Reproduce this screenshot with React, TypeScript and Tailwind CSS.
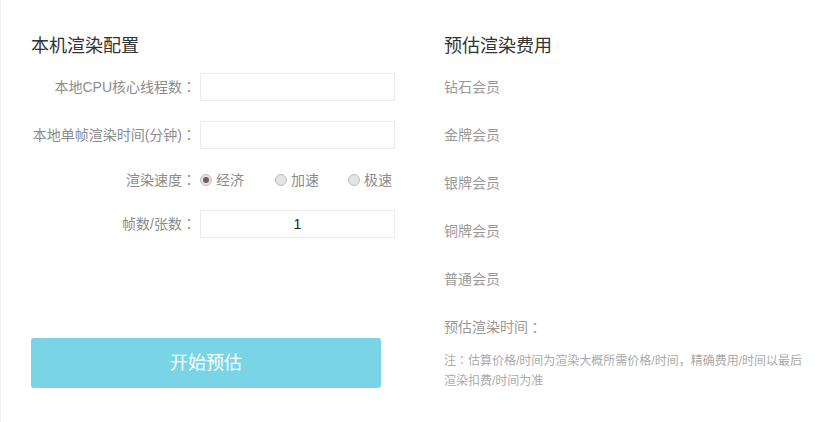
import { useState } from 'react';

const FONT = { fontFamily: '"Liberation Sans", "Noto Sans CJK SC", sans-serif' };

type Speed = 'eco' | 'fast' | 'max';

// fullwidth colon, centred in its box like the original font draws it
function Colon() {
  return <span className="font-['Noto_Sans_CJK_TC',sans-serif]">：</span>;
}

function Radio({ checked, label, onClick }: { checked: boolean; label: string; onClick: () => void }) {
  return (
    <button type="button" onClick={onClick} className="flex items-center gap-[4px] text-[14px] text-[#8c8c8c]">
      <span className="flex h-[12px] w-[12px] items-center justify-center rounded-full border border-[#bdbdbd] bg-[#e4e4e4]">
        {checked && <span className="h-[6px] w-[6px] rounded-full bg-[#7b5858]" />}
      </span>
      {label}
    </button>
  );
}

function Field({ label, value = '' }: { label: string; value?: string }) {
  return (
    <div className="flex h-[28px] items-center">
      <label className="w-[169px] pr-[4px] text-right text-[14px] text-[#8c8c8c]">
        {label}
        <Colon />
      </label>
      <input
        defaultValue={value}
        className="h-[28px] w-[195px] border border-[#ebebeb] bg-white text-center text-[14px] text-[#222] outline-none"
      />
    </div>
  );
}

export default function App() {
  const [speed, setSpeed] = useState<Speed>('eco');
  const tiers = ['钻石会员', '金牌会员', '银牌会员', '铜牌会员', '普通会员'];

  return (
    <div style={FONT} className="flex h-[422px] w-[840px] border-l border-[#eef2f7] bg-white">
      <div className="w-[412px] pl-[30px] pt-[34px]">
        <h2 className="h-[24px] text-[18px] leading-[24px] text-[#333]">本机渲染配置</h2>
        <div className="mt-[15px] flex flex-col">
          <Field label="本地CPU核心线程数" />
          <div className="mt-[20px]">
            <Field label="本地单帧渲染时间(分钟)" />
          </div>
          <div className="mt-[17px] flex h-[28px] items-center">
            <span className="w-[169px] pr-[4px] text-right text-[14px] text-[#8c8c8c]">
              渲染速度
              <Colon />
            </span>
            <div className="flex items-center">
              <Radio checked={speed === 'eco'} label="经济" onClick={() => setSpeed('eco')} />
              <div className="ml-[31px]">
                <Radio checked={speed === 'fast'} label="加速" onClick={() => setSpeed('fast')} />
              </div>
              <div className="ml-[29px]">
                <Radio checked={speed === 'max'} label="极速" onClick={() => setSpeed('max')} />
              </div>
            </div>
          </div>
          <div className="mt-[16px]">
            <Field label="帧数/张数" value="1" />
          </div>
        </div>
        <button
          type="button"
          className="mt-[100px] h-[50px] w-[350px] rounded-[3px] bg-[#79d5e6] text-[18px] text-white"
        >
          开始预估
        </button>
      </div>

      <div className="pt-[34px]">
        <h2 className="h-[24px] pl-[31px] text-[18px] leading-[24px] text-[#333]">预估渲染费用</h2>
        <ul className="mt-[5px] pl-[31px]">
          {tiers.map((t) => (
            <li key={t} className="flex h-[48px] items-center text-[14px] text-[#999]">
              {t}
            </li>
          ))}
          <li className="flex h-[48px] items-center text-[14px] text-[#999]">
            预估渲染时间
            <Colon />
          </li>
        </ul>
        <p className="-mt-[1px] pl-[31px] text-[12px] leading-[20px] text-[#aaa] whitespace-nowrap">
          注<Colon />估算价格/时间为渲染大概所需价格/时间，精确费用/时间以最后
          <br />
          渲染扣费/时间为准
        </p>
      </div>
    </div>
  );
}
